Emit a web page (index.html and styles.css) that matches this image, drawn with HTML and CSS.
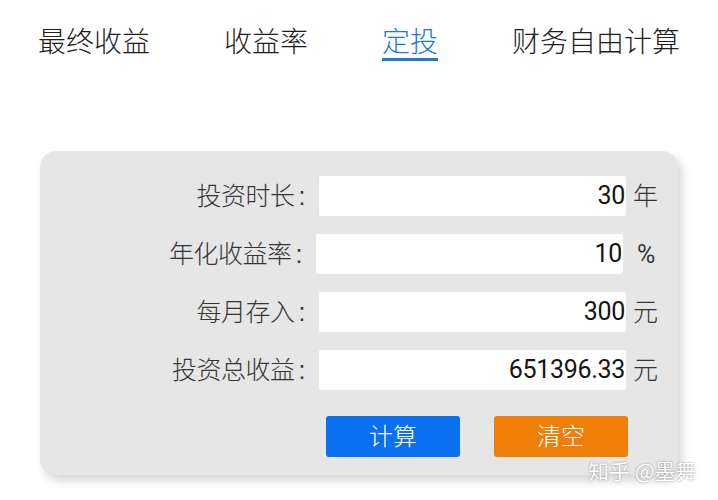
FILE: index.html
```html
<!DOCTYPE html>
<html lang="zh">
<head>
<meta charset="utf-8">
<link rel="stylesheet" href="styles.css">
</head>
<body>
<nav class="tabs">
  <div class="tab">最终收益</div>
  <div class="tab">收益率</div>
  <div class="tab active">定投</div>
  <div class="tab">财务自由计算</div>
</nav>
<section class="card">
  <div class="row">
    <label class="label">投资时长<span class="colon">:</span></label>
    <div class="field">30</div>
    <span class="unit">年</span>
  </div>
  <div class="row row-shift">
    <label class="label">年化收益率<span class="colon">:</span></label>
    <div class="field">10</div>
    <span class="unit unit-pct">%</span>
  </div>
  <div class="row">
    <label class="label">每月存入<span class="colon">:</span></label>
    <div class="field">300</div>
    <span class="unit">元</span>
  </div>
  <div class="row">
    <label class="label">投资总收益<span class="colon">:</span></label>
    <div class="field">651396.33</div>
    <span class="unit">元</span>
  </div>
  <div class="buttons">
    <div class="btn btn-blue">计算</div>
    <div class="btn btn-orange">清空</div>
  </div>
</section>
<div class="watermark">知乎 @墨舞</div>
</body>
</html>
```
FILE: styles.css
```css
html, body {
  margin: 0;
  padding: 0;
  background: #ffffff;
}
body {
  position: relative;
  width: 718px;
  height: 500px;
  overflow: hidden;
  font-family: "Noto Sans CJK SC", "Noto Sans", sans-serif;
}
.tabs {
  display: flex;
  gap: 74px;
  padding: 23px 0 0 38px;
}
.tab {
  font-size: 28px;
  line-height: 35px;
  height: 35px;
  color: #1e1e1e;
  font-weight: 300;
  border-bottom: 3px solid transparent;
}
.tab.active {
  color: #1f78d1;
  border-bottom-color: #1f78d1;
}
.card {
  margin: 90px 0 0 40px;
  width: 638px;
  height: 324px;
  box-sizing: border-box;
  padding-top: 25px;
  background: #e6e6e6;
  border-radius: 16px;
  box-shadow: 4px 6px 10px rgba(0, 0, 0, 0.16);
}
.row {
  display: flex;
  align-items: center;
  height: 40px;
  margin-bottom: 18px;
}
.label {
  width: 267px;
  box-sizing: border-box;
  padding-right: 2px;
  padding-bottom: 4px;
  text-align: right;
  font-size: 25px;
  color: #353535;
  font-weight: 300;
  letter-spacing: -0.5px;
}
.colon {
  margin-left: 4px;
  font-family: "Liberation Sans", Arial, sans-serif;
}
.row-shift .label {
  width: 264px;
}
.field {
  margin-left: 12px;
  width: 307px;
  height: 40px;
  box-sizing: border-box;
  padding-right: 1px;
  background: #ffffff;
  border-radius: 2px;
  text-align: right;
  font-family: "Roboto", "Liberation Sans", Arial, sans-serif;
  font-weight: 400;
  font-size: 25px;
  line-height: 39px;
  color: #151515;
  letter-spacing: -0.3px;
}
.unit {
  margin-left: 7px;
  padding-bottom: 4px;
  font-size: 25px;
  color: #353535;
  font-weight: 300;
}
.unit-pct {
  margin-left: 14px;
  padding-bottom: 0;
  font-family: "Roboto", "Liberation Sans", Arial, sans-serif;
  font-weight: 400;
  font-size: 25px;
}
.buttons {
  display: flex;
  gap: 34px;
  margin-top: 26px;
  padding-left: 286px;
}
.btn {
  width: 134px;
  height: 41px;
  border-radius: 3px;
  color: #ffffff;
  font-size: 24px;
  line-height: 38px;
  text-align: center;
  font-weight: 300;
}
.btn-blue {
  background: #0a6ff0;
}
.btn-orange {
  background: #f07f0a;
}
.watermark {
  position: absolute;
  left: 588px;
  top: 455px;
  font-size: 21px;
  color: #ffffff;
  text-shadow: 0 0 2px rgba(0, 0, 0, 0.45);
  white-space: nowrap;
}
```
